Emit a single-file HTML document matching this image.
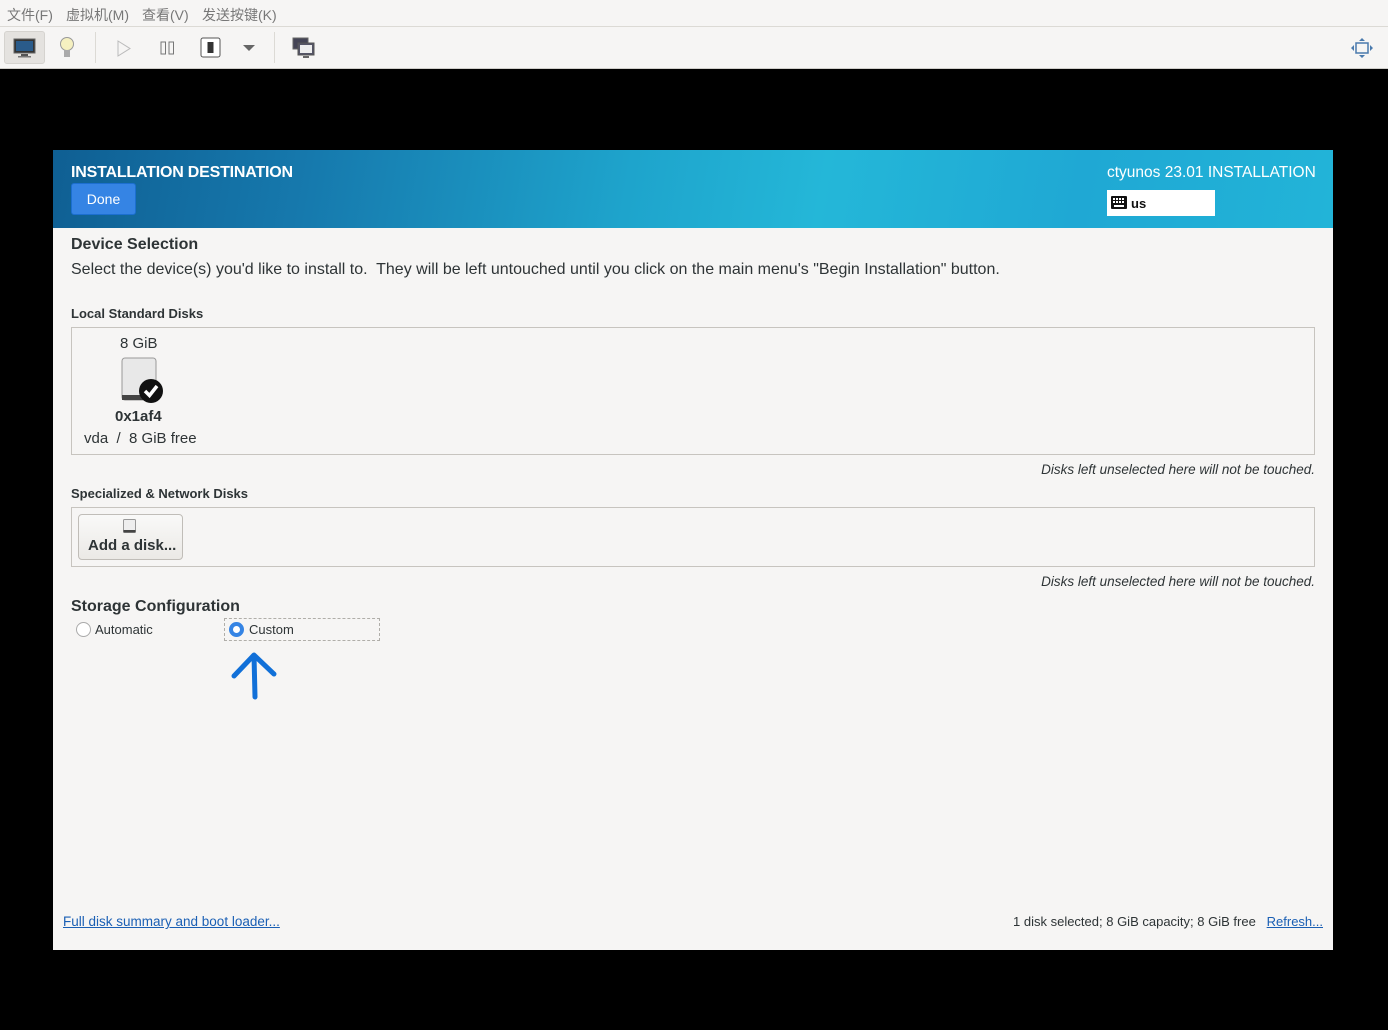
<!DOCTYPE html>
<html><head><meta charset="utf-8"><style>
*{margin:0;padding:0;box-sizing:border-box}
body{width:1388px;height:1030px;background:#000;font-family:"Liberation Sans","Noto Sans CJK SC",sans-serif;position:relative;overflow:hidden;color:#2e3436}
.abs{position:absolute}
#menu{left:0;top:0;width:1388px;height:27px;background:#f6f5f4;border-bottom:1px solid #dcdad5;font-size:14px;color:#777}
#menu span{position:absolute;top:5px}
#tb{left:0;top:27px;width:1388px;height:42px;background:#f6f5f4;border-bottom:1px solid #cfcdc9}
.sep{position:absolute;top:5px;width:1px;height:31px;background:#dcdad5}
#dlg{left:53px;top:150px;width:1280px;height:800px;background:#f6f5f4}
#hdr{left:0;top:0;width:1280px;height:78px;background:linear-gradient(100deg,#0f5f93 0%,#1679ad 20%,#1ea4cc 45%,#24b7d8 60%,#1fa8d4 80%,#22b4d8 100%)}
.t{position:absolute;white-space:nowrap}
.box{position:absolute;border:1px solid #c7c4bf;background:#f6f5f4}
a{color:#1a5fb4;text-decoration:underline}
</style></head><body>
<div id="menu" class="abs"><span style="left:7px">文件(F)</span><span style="left:66px">虚拟机(M)</span><span style="left:142px">查看(V)</span><span style="left:202px">发送按键(K)</span></div>
<div id="tb" class="abs">
 <div class="abs" style="left:4px;top:4px;width:41px;height:33px;background:#e4e2df;border-radius:3px;border:1px solid #d5d3cf"></div>
 <svg class="abs" style="left:13px;top:10px" width="24" height="22"><rect x="1" y="2" width="21" height="14" fill="#333" stroke="#666"/><rect x="3" y="4" width="17" height="10" fill="#2a5b8a"/><rect x="8" y="17" width="7" height="2" fill="#555"/><rect x="5" y="19" width="13" height="1.5" fill="#777"/></svg>
 <svg class="abs" style="left:58px;top:9px" width="18" height="24"><circle cx="9" cy="8" r="6.5" fill="#f5f0c0" stroke="#999"/><rect x="6" y="14" width="6" height="7" fill="#aaa"/></svg>
 <div class="sep" style="left:95px"></div>
 <svg class="abs" style="left:116px;top:13px" width="16" height="17"><path d="M2 1 L14 8.5 L2 16 Z" fill="none" stroke="#bbb"/></svg>
 <svg class="abs" style="left:160px;top:14px" width="16" height="14"><rect x="1" y="1" width="4.5" height="12" fill="none" stroke="#777"/><rect x="9" y="1" width="4.5" height="12" fill="none" stroke="#777"/></svg>
 <svg class="abs" style="left:200px;top:10px" width="21" height="21"><rect x="1" y="1" width="19" height="19" rx="2" fill="#fff" stroke="#555"/><rect x="7.5" y="5" width="6" height="11" fill="#333"/></svg>
 <svg class="abs" style="left:242px;top:17px" width="14" height="8"><path d="M1 1 L13 1 L7 7 Z" fill="#666"/></svg>
 <div class="sep" style="left:274px"></div>
 <svg class="abs" style="left:292px;top:10px" width="23" height="22"><rect x="1" y="1" width="15" height="11" fill="#445" stroke="#666"/><rect x="6" y="6" width="16" height="12" fill="#556" stroke="#555"/><rect x="8" y="8" width="12" height="8" fill="#eee"/><rect x="11" y="19" width="6" height="2" fill="#666"/></svg>
 <svg class="abs" style="left:1350px;top:10px" width="24" height="22"><rect x="6" y="6" width="12" height="10" fill="none" stroke="#4a7aad" stroke-width="1.5"/><path d="M12 1 L9 4 H15 Z M12 21 L9 18 H15 Z M1 11 L4 8 V14 Z M23 11 L20 8 V14 Z" fill="#4a7aad"/></svg>
</div>
<div id="dlg" class="abs">
 <div id="hdr" class="abs"></div>
 <div class="t" style="left:18px;top:14px;font-size:16px;font-weight:bold;color:#fff;letter-spacing:-0.2px">INSTALLATION DESTINATION</div>
 <div class="abs" style="left:18px;top:33px;width:65px;height:32px;background:#3584e4;border-radius:3px;border:1px solid #1c6fd0;color:#fff;font-size:14px;text-align:center;line-height:30px">Done</div>
 <div class="t" style="left:1054px;top:14px;font-size:15.5px;color:#fff">ctyunos 23.01 INSTALLATION</div>
 <div class="abs" style="left:1054px;top:40px;width:108px;height:26px;background:#fff"></div>
 <svg class="abs" style="left:1058px;top:46px" width="16" height="13"><rect x="0" y="0" width="16" height="13" rx="1" fill="#111"/><g fill="#fff"><rect x="2" y="2" width="2" height="2"/><rect x="5" y="2" width="2" height="2"/><rect x="8" y="2" width="2" height="2"/><rect x="11" y="2" width="2" height="2"/><rect x="2" y="5" width="2" height="2"/><rect x="5" y="5" width="2" height="2"/><rect x="8" y="5" width="2" height="2"/><rect x="11" y="5" width="2" height="2"/><rect x="3" y="9" width="10" height="2"/></g></svg>
 <div class="t" style="left:1078px;top:46px;font-size:13px;font-weight:bold;color:#111">us</div>
 <div class="t" style="left:18px;top:86px;font-size:16px;font-weight:bold">Device Selection</div>
 <div class="t" style="left:18px;top:111px;font-size:16px">Select the device(s) you'd like to install to.&nbsp; They will be left untouched until you click on the main menu's "Begin Installation" button.</div>
 <div class="t" style="left:18px;top:156px;font-size:13px;font-weight:bold">Local Standard Disks</div>
 <div class="box" style="left:18px;top:177px;width:1244px;height:128px"></div>
 <div class="t" style="left:67px;top:185px;font-size:15px">8 GiB</div>
 <svg class="abs" style="left:68px;top:207px" width="44" height="48"><rect x="1" y="1" width="34" height="42" rx="3" fill="#e8e8e8" stroke="#999"/><rect x="1" y="38" width="34" height="5" fill="#444"/><circle cx="30" cy="34" r="12" fill="#111"/><path d="M24 34 L28.5 38.5 L36 29" stroke="#fff" stroke-width="3.5" fill="none"/></svg>
 <div class="t" style="left:62px;top:258px;font-size:15px;font-weight:bold">0x1af4</div>
 <div class="t" style="left:31px;top:280px;font-size:15px">vda&nbsp; /&nbsp; 8 GiB free</div>
 <div class="t" style="right:18px;top:312px;font-size:13.5px;font-style:italic">Disks left unselected here will not be touched.</div>
 <div class="t" style="left:18px;top:336px;font-size:13px;font-weight:bold">Specialized &amp; Network Disks</div>
 <div class="box" style="left:18px;top:357px;width:1244px;height:60px"></div>
 <div class="abs" style="left:25px;top:364px;width:105px;height:46px;border:1px solid #c0bdb8;border-radius:4px;background:linear-gradient(#f9f9f8,#ebe9e6)"></div>
 <svg class="abs" style="left:70px;top:369px" width="14" height="15"><rect x="0.5" y="0.5" width="12" height="13" rx="1" fill="#eee" stroke="#999"/><rect x="0.5" y="11" width="12" height="2.5" fill="#444"/></svg>
 <div class="t" style="left:35px;top:387px;font-size:15px;font-weight:bold;color:#2e3436">Add a disk...</div>
 <div class="t" style="right:18px;top:424px;font-size:13.5px;font-style:italic">Disks left unselected here will not be touched.</div>
 <div class="t" style="left:18px;top:448px;font-size:16px;font-weight:bold">Storage Configuration</div>
 <div class="abs" style="left:23px;top:472px;width:15px;height:15px;border-radius:50%;border:1px solid #aaa;background:#fff"></div>
 <div class="t" style="left:42px;top:472px;font-size:13px">Automatic</div>
 <div class="abs" style="left:171px;top:468px;width:156px;height:23px;border:1px dashed #b0aea9"></div>
 <div class="abs" style="left:176px;top:472px;width:15px;height:15px;border-radius:50%;background:#3584e4"></div>
 <div class="abs" style="left:180px;top:476px;width:7px;height:7px;border-radius:50%;background:#fff"></div>
 <div class="t" style="left:196px;top:472px;font-size:13px">Custom</div>
 <svg class="abs" style="left:176px;top:500px" width="52" height="52"><path d="M26 47 L25 5 M5 26 L25 5 L45 24" stroke="#1170d8" stroke-width="5" fill="none" stroke-linecap="round" stroke-linejoin="round"/></svg>
 <div class="t" style="left:10px;top:764px;font-size:13.5px"><a>Full disk summary and boot loader...</a></div>
 <div class="t" style="right:10px;top:764px;font-size:13px">1 disk selected; 8 GiB capacity; 8 GiB free&nbsp;&nbsp; <a>Refresh...</a></div>
</div>
</body></html>
